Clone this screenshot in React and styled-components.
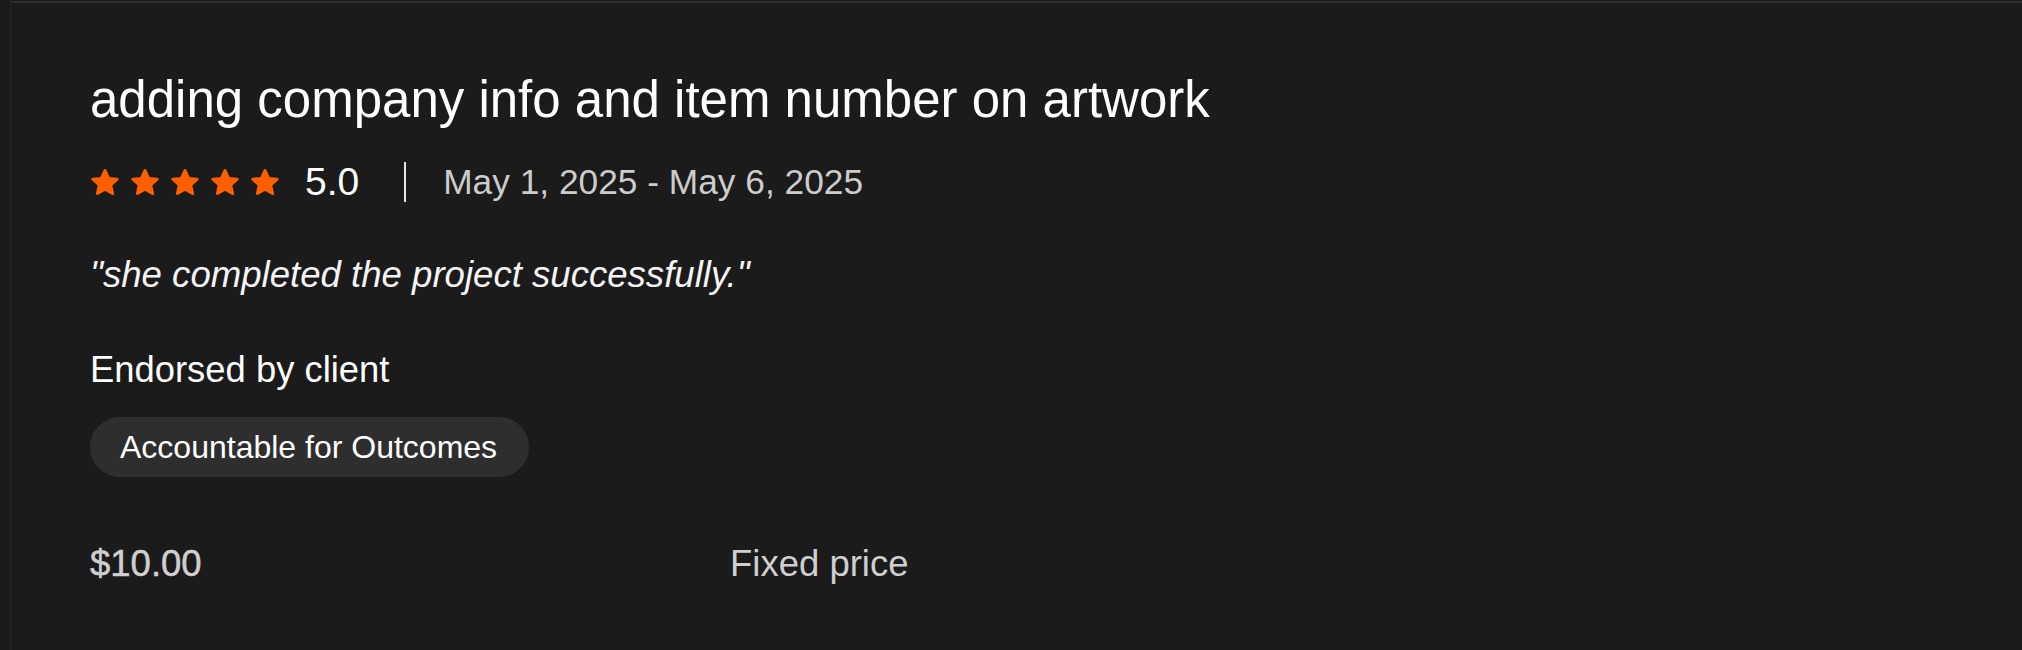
import React from "react";
import styled, { createGlobalStyle } from "styled-components";

const GlobalStyle = createGlobalStyle`
  html, body {
    margin: 0;
    padding: 0;
    background: #1b1b1b;
  }
  body {
    font-family: "Liberation Sans", Arial, sans-serif;
    color: #ffffff;
  }
`;

const Card = styled.section`
  margin: 1px 0 0 10px;
  min-height: 649px;
  box-sizing: border-box;
  border-top: 2px solid #2e2e2e;
  border-left: 1px solid #262626;
  padding: 67px 0 0 79px;
`;

const Title = styled.h2`
  margin: 0;
  font-size: 51px;
  line-height: 60px;
  font-weight: 400;
  color: #ffffff;
`;

const RatingRow = styled.div`
  display: flex;
  align-items: center;
  height: 40px;
  margin-top: 32px;
`;

const Stars = styled.div`
  display: flex;
  gap: 10px;
  margin-right: 25px;
`;

const Score = styled.span`
  font-size: 39px;
  color: #ffffff;
`;

const Divider = styled.span`
  width: 2px;
  height: 40px;
  background: #e6e6e6;
  margin: 0 37px 0 45px;
`;

const Dates = styled.span`
  font-size: 35.3px;
  color: #cccccc;
`;

const Quote = styled.p`
  margin: 51px 0 0;
  font-size: 36.6px;
  line-height: 44px;
  font-style: italic;
  color: #f4f4f4;
`;

const Label = styled.p`
  margin: 51px 0 0;
  font-size: 36.4px;
  line-height: 44px;
  color: #ffffff;
`;

const Chip = styled.span`
  display: inline-flex;
  align-items: center;
  height: 60px;
  margin-top: 25px;
  padding: 0 32px 0 30px;
  border-radius: 30px;
  background: #2e2e2e;
  font-size: 32px;
  color: #ffffff;
`;

const Terms = styled.div`
  display: grid;
  grid-template-columns: 640px auto;
  margin-top: 65px;
  font-size: 36.5px;
  line-height: 44px;
  color: #cfcfcf;
`;

const Amount = styled.span`
  -webkit-text-stroke: 0.5px #cfcfcf;
`;

const Star = () => (
  <svg width="30" height="29" viewBox="0 0 30 29">
    <path
      d="M15 2.5 L18.6 10.4 L27.2 11.2 L20.7 17 L22.6 25.5 L15 21.1 L7.4 25.5 L9.3 17 L2.8 11.2 L11.4 10.4 Z"
      fill="#ff5f00"
      stroke="#ff5f00"
      strokeWidth="3"
      strokeLinejoin="round"
    />
  </svg>
);

export default function App() {
  return (
    <>
      <GlobalStyle />
      <Card>
        <Title>adding company info and item number on artwork</Title>
        <RatingRow>
          <Stars>
            {[0, 1, 2, 3, 4].map((i) => (
              <Star key={i} />
            ))}
          </Stars>
          <Score>5.0</Score>
          <Divider />
          <Dates>May 1, 2025 - May 6, 2025</Dates>
        </RatingRow>
        <Quote>"she completed the project successfully."</Quote>
        <Label>Endorsed by client</Label>
        <Chip>Accountable for Outcomes</Chip>
        <Terms>
          <Amount>$10.00</Amount>
          <span>Fixed price</span>
        </Terms>
      </Card>
    </>
  );
}
